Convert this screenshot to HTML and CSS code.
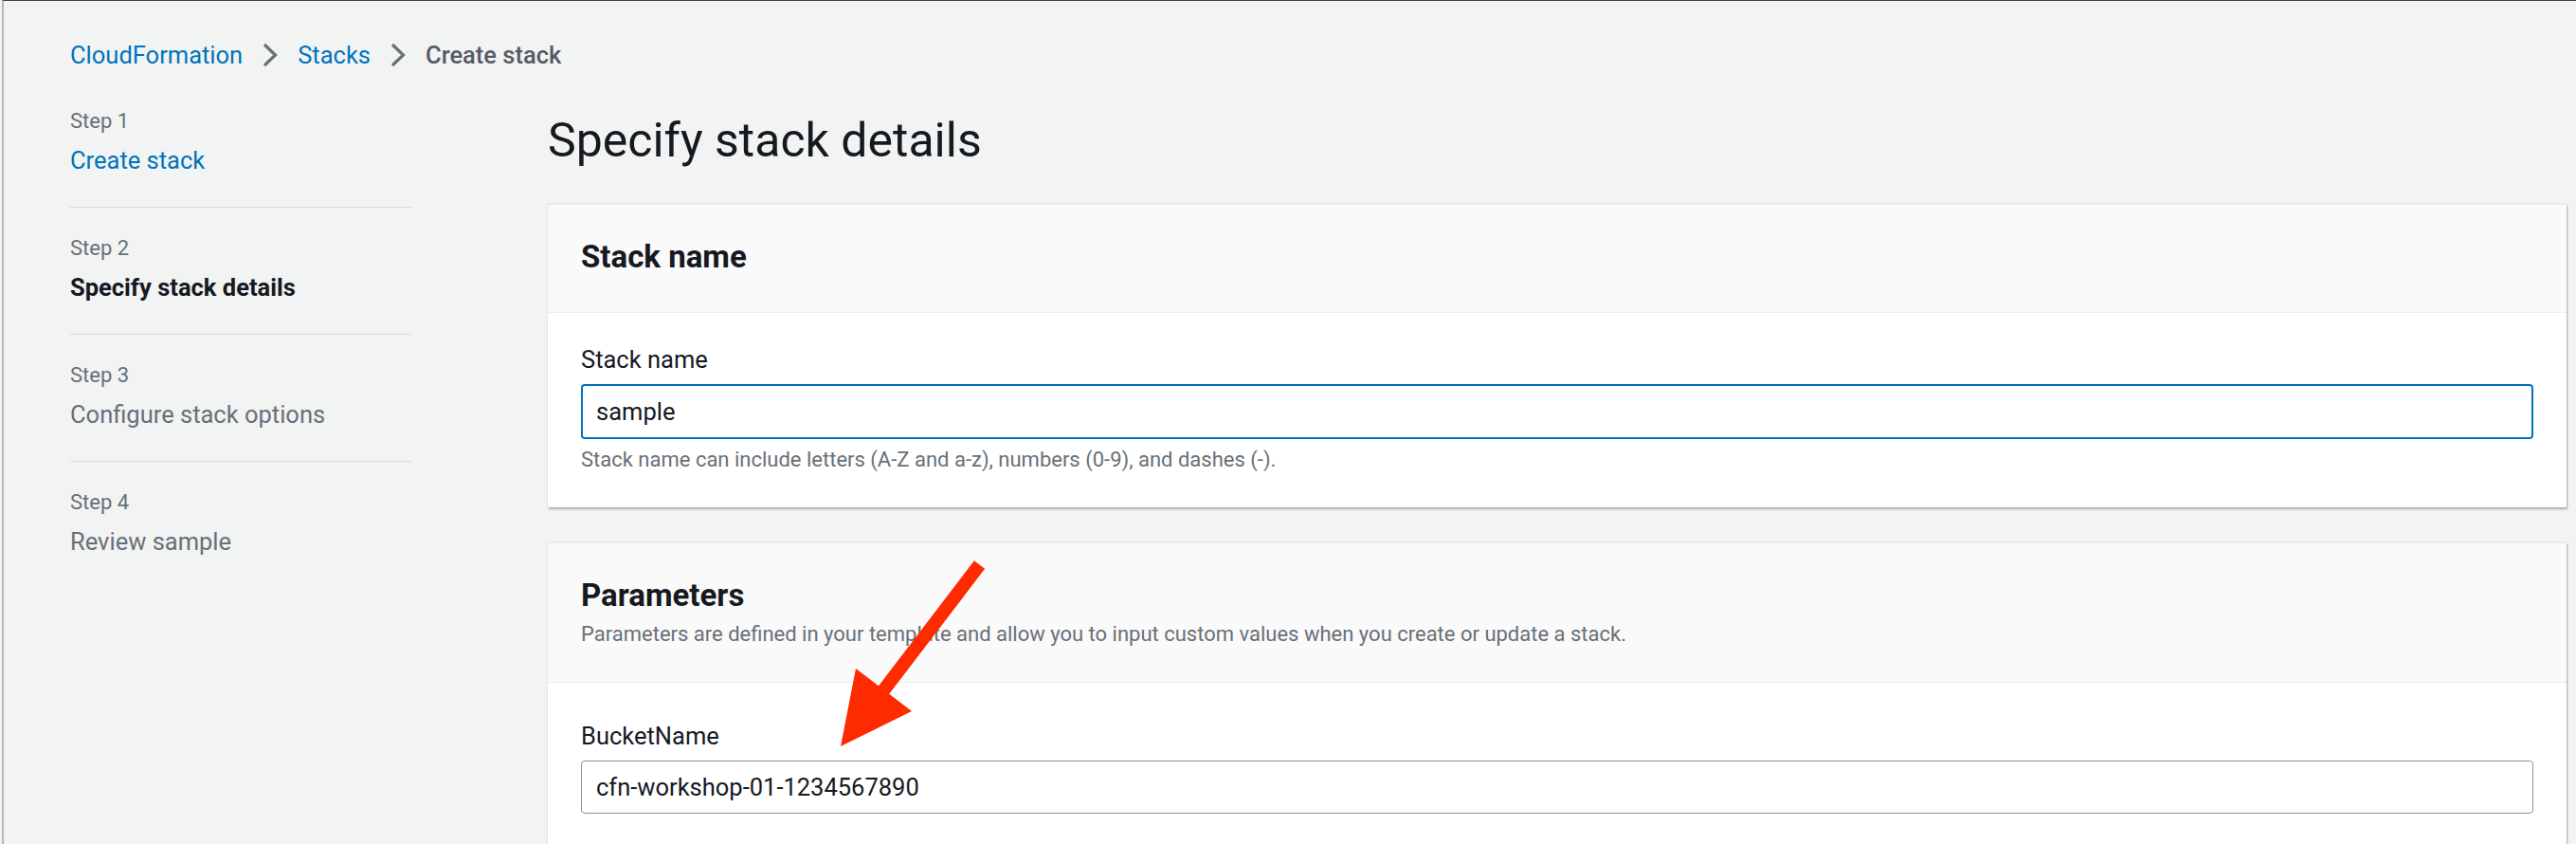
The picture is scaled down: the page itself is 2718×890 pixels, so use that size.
FILE: index.html
```html
<!DOCTYPE html>
<html lang="en">
<head>
<meta charset="utf-8">
<title>Specify stack details</title>
<link rel="stylesheet" href="styles.css">
</head>
<body>
<div class="page">
  <nav class="breadcrumbs">
    <a class="crumb-link" href="#">CloudFormation</a>
    <svg class="chev" width="16" height="26" viewBox="0 0 16 26"><path d="M2 2 L13.5 13 L2 24" fill="none" stroke="#687078" stroke-width="3.2"/></svg>
    <a class="crumb-link" href="#">Stacks</a>
    <svg class="chev" width="16" height="26" viewBox="0 0 16 26"><path d="M2 2 L13.5 13 L2 24" fill="none" stroke="#687078" stroke-width="3.2"/></svg>
    <span class="crumb-current">Create stack</span>
  </nav>

  <div class="layout">
    <aside class="steps">
      <div class="step">
        <div class="step-label">Step 1</div>
        <a class="step-title step-link" href="#">Create stack</a>
      </div>
      <div class="step">
        <div class="step-label">Step 2</div>
        <div class="step-title step-active">Specify stack details</div>
      </div>
      <div class="step">
        <div class="step-label">Step 3</div>
        <div class="step-title step-disabled">Configure stack options</div>
      </div>
      <div class="step step-last">
        <div class="step-label">Step 4</div>
        <div class="step-title step-disabled">Review sample</div>
      </div>
    </aside>

    <main class="main">
      <h1 class="page-title">Specify stack details</h1>

      <section class="card">
        <header class="card-header">
          <h2 class="card-title">Stack name</h2>
        </header>
        <div class="card-body">
          <label class="field-label">Stack name</label>
          <div class="input input-focused">sample</div>
          <div class="field-hint">Stack name can include letters (A-Z and a-z), numbers (0-9), and dashes (-).</div>
        </div>
      </section>

      <section class="card card-params">
        <header class="card-header">
          <h2 class="card-title">Parameters</h2>
          <p class="card-desc">Parameters are defined in your template and allow you to input custom values when you create or update a stack.</p>
        </header>
        <div class="card-body card-body-params">
          <label class="field-label">BucketName</label>
          <div class="input">cfn-workshop-01-1234567890</div>
        </div>
      </section>
    </main>
  </div>

  <svg class="annotation" width="2718" height="890" viewBox="0 0 2718 890">
    <polygon points="1027.9,591.2 1039.1,599.8 938.2,731.8 962,750 887,787 903,705 927,723.2" fill="#fe2a00"/>
  </svg>
</div>
</body>
</html>
```

FILE: styles.css
```css
html, body {
  margin: 0;
  padding: 0;
  height: 100%;
  overflow: hidden;
}

body {
  background: #f2f3f3;
  font-family: Roboto, "Liberation Sans", Arial, sans-serif;
  color: #16191f;
}

.page {
  position: relative;
  box-sizing: border-box;
  height: 100%;
  margin-left: 2px;
  border-top: 1px solid #3d4247;
  border-left: 2px solid #b4b9bc;
  padding: 37px 10px 0 70px;
}

.breadcrumbs {
  display: flex;
  align-items: center;
  gap: 21px;
  height: 40px;
  font-size: 25.5px;
  line-height: 40px;
}

.crumb-link {
  color: #0073bb;
  text-decoration: none;
}

.crumb-current {
  color: #545b64;
  font-weight: 500;
}

.chev {
  display: block;
}

.layout {
  display: flex;
  gap: 144px;
  margin-top: 34px;
}

.steps {
  width: 360px;
  flex: 0 0 360px;
}

.step {
  display: flex;
  flex-direction: column;
  padding: 27px 0 29px;
  border-bottom: 1px solid #d5dbdb;
}

.step:first-child {
  padding-top: 0;
}

.step-last {
  border-bottom: none;
}

.step-label {
  font-size: 22px;
  line-height: 32px;
  color: #687078;
  margin-bottom: 5px;
}

.step-title {
  font-size: 25.5px;
  line-height: 40px;
}

.step-link {
  color: #0073bb;
  text-decoration: none;
}

.step-active {
  color: #16191f;
  font-weight: 700;
}

.step-disabled {
  color: #687078;
}

.main {
  flex: 1;
  min-width: 0;
}

.page-title {
  margin: 8px 0 39px;
  font-size: 50px;
  line-height: 56px;
  font-weight: 400;
  color: #16191f;
}

.card {
  background: #ffffff;
  border-top: 1px solid #eaeded;
  box-shadow: 1px 2px 2px rgba(0, 28, 36, 0.3), 0 0 1px rgba(0, 28, 36, 0.25);
  margin-bottom: 37px;
}

.card-header {
  background: #fafafa;
  padding: 33px 35px 36px;
  border-bottom: 1px solid #eaeded;
}

.card-params .card-header {
  padding-bottom: 34px;
}

.card-title {
  margin: 0;
  font-size: 33px;
  line-height: 44px;
  font-weight: 700;
  color: #16191f;
}

.card-desc {
  margin: 3px 0 0;
  font-size: 22px;
  line-height: 32px;
  color: #687078;
}

.card-body {
  padding: 29px 35px 34px;
}

.card-body-params {
  padding-top: 36px;
  padding-bottom: 200px;
}

.field-label {
  display: block;
  font-size: 25.5px;
  line-height: 40px;
  color: #16191f;
  margin-bottom: 6px;
}

.input {
  box-sizing: border-box;
  height: 56px;
  border: 1px solid #879596;
  border-radius: 4px;
  padding: 0 15px;
  font-size: 25.5px;
  line-height: 54px;
  color: #16191f;
  background: #ffffff;
}

.input-focused {
  height: 58px;
  border: 2px solid #0073bb;
  padding: 0 14px;
}

.field-hint {
  margin-top: 6px;
  font-size: 22px;
  line-height: 32px;
  color: #687078;
}

.annotation {
  position: absolute;
  top: -1px;
  left: -4px;
  pointer-events: none;
}
```
